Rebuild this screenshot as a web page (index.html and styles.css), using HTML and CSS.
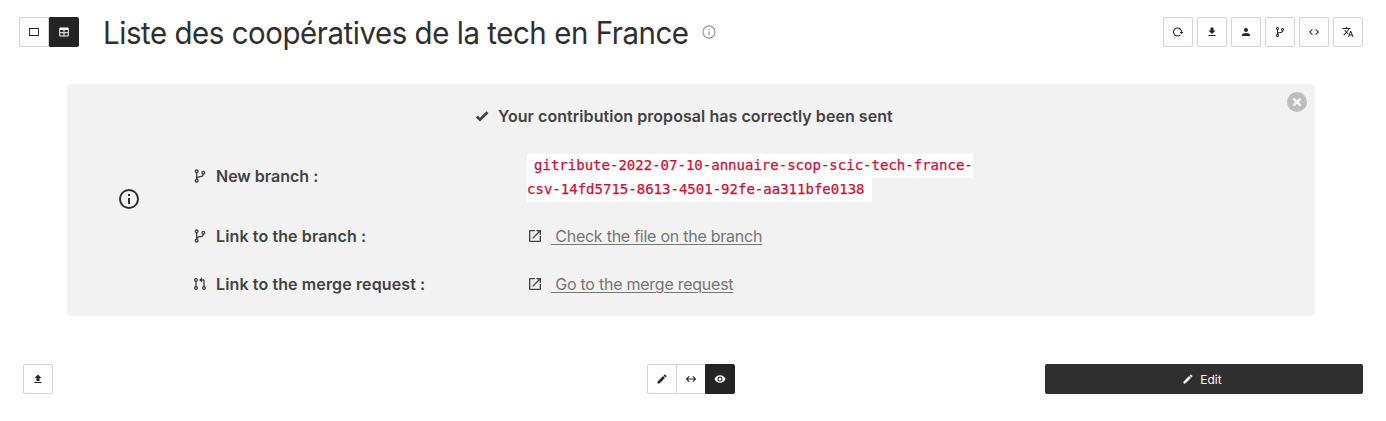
FILE: index.html
```html
<!DOCTYPE html>
<html lang="fr">
<head>
<meta charset="utf-8">
<title>Liste des coopératives de la tech en France</title>
<link rel="stylesheet" href="styles.css">
</head>
<body>
<svg class="sprite" aria-hidden="true">
<symbol id="card" viewBox="0 0 24 24"><path d="M2 4V20H22V4H2M20.2 18.2H3.8V5.8H20.2V18.2Z"/></symbol>
<symbol id="table" viewBox="0 0 24 24"><path d="M4.5 3H19.5A2 2 0 0 1 21.5 5V19A2 2 0 0 1 19.5 21H4.5A2 2 0 0 1 2.5 19V5A2 2 0 0 1 4.5 3M4.5 8V12.5H11V8H4.5M13 8V12.5H19.5V8H13M4.5 14.5V19H11V14.5H4.5M13 14.5V19H19.5V14.5H13Z"/></symbol>
<symbol id="info" viewBox="0 0 24 24"><path d="M11 9H13V7H11M12 20C7.59 20 4 16.41 4 12C4 7.59 7.59 4 12 4C16.41 4 20 7.59 20 12C20 16.41 16.41 20 12 20M12 2A10 10 0 1 0 12 22A10 10 0 1 0 12 2M11 17H13V11H11V17Z"/></symbol>
<symbol id="reload" viewBox="0 0 24 24"><path d="M2 12C2 16.97 6.03 21 11 21C13.39 21 15.68 20.06 17.4 18.4L15.9 16.9C14.63 18.25 12.86 19 11 19C4.76 19 1.64 11.46 6.05 7.05C10.46 2.64 18 5.77 18 12H15L19 16H19.1L23 12H20C20 7.03 15.97 3 11 3C6.03 3 2 7.03 2 12Z"/></symbol>
<symbol id="download" viewBox="0 0 24 24"><path d="M5 20H19V18H5M19 9H15V3H9V9H5L12 16L19 9Z"/></symbol>
<symbol id="upload" viewBox="0 0 24 24"><path d="M9 16V10H5L12 3L19 10H15V16H9M5 20V18H19V20H5Z"/></symbol>
<symbol id="account" viewBox="0 0 24 24"><path d="M12 4A4 4 0 0 1 16 8A4 4 0 0 1 12 12A4 4 0 0 1 8 8A4 4 0 0 1 12 4M12 14C16.42 14 20 15.79 20 18V20H4V18C4 15.79 7.58 14 12 14Z"/></symbol>
<symbol id="branch" viewBox="0 0 24 24"><path d="M13,14C9.64,14 8.54,15.35 8.18,16.24C9.25,16.7 10,17.76 10,19A3,3 0 0,1 7,22A3,3 0 0,1 4,19C4,17.69 4.83,16.58 6,16.17V7.83C4.83,7.42 4,6.31 4,5A3,3 0 0,1 7,2A3,3 0 0,1 10,5C10,6.31 9.17,7.42 8,7.83V13.12C8.88,12.47 10.16,12 12,12C14.67,12 15.56,10.66 15.85,9.77C14.77,9.32 14,8.25 14,7A3,3 0 0,1 17,4A3,3 0 0,1 20,7C20,8.34 19.12,9.5 17.91,9.86C17.65,11.29 16.68,14 13,14M7,18A1,1 0 0,0 6,19A1,1 0 0,0 7,20A1,1 0 0,0 8,19A1,1 0 0,0 7,18M7,4A1,1 0 0,0 6,5A1,1 0 0,0 7,6A1,1 0 0,0 8,5A1,1 0 0,0 7,4M17,6A1,1 0 0,0 16,7A1,1 0 0,0 17,8A1,1 0 0,0 18,7A1,1 0 0,0 17,6Z"/></symbol>
<symbol id="pull" viewBox="0 0 24 24"><path d="M6,3A3,3 0 0,1 9,6C9,7.31 8.17,8.42 7,8.83V15.17C8.17,15.58 9,16.69 9,18A3,3 0 0,1 6,21A3,3 0 0,1 3,18C3,16.69 3.83,15.58 5,15.17V8.83C3.83,8.42 3,7.31 3,6A3,3 0 0,1 6,3M6,5A1,1 0 0,0 5,6A1,1 0 0,0 6,7A1,1 0 0,0 7,6A1,1 0 0,0 6,5M6,17A1,1 0 0,0 5,18A1,1 0 0,0 6,19A1,1 0 0,0 7,18A1,1 0 0,0 6,17M21,18A3,3 0 0,1 18,21A3,3 0 0,1 15,18C15,16.69 15.83,15.58 17,15.17V7H15V10.25L10.75,6L15,1.75V5H17A2,2 0 0,1 19,7V15.17C20.17,15.58 21,16.69 21,18M18,17A1,1 0 0,0 17,18A1,1 0 0,0 18,19A1,1 0 0,0 19,18A1,1 0 0,0 18,17Z"/></symbol>
<symbol id="code" viewBox="0 0 24 24"><path d="M14.6 16.6L19.2 12L14.6 7.4L16 6L22 12L16 18L14.6 16.6M9.4 16.6L4.8 12L9.4 7.4L8 6L2 12L8 18L9.4 16.6Z"/></symbol>
<symbol id="translate" viewBox="0 0 24 24"><path d="M12.87,15.07L10.33,12.56L10.36,12.53C12.1,10.59 13.34,8.36 14.07,6H17V4H10V2H8V4H1V6H12.17C11.5,7.92 10.44,9.75 9,11.35C8.07,10.32 7.3,9.19 6.69,8H4.69C5.42,9.63 6.42,11.17 7.67,12.56L2.58,17.58L4,19L9,14L12.11,17.11L12.87,15.07M18.5,10H16.5L12,22H14L15.12,19H19.87L21,22H23L18.5,10M15.88,17L17.5,12.67L19.12,17H15.88Z"/></symbol>
<symbol id="check" viewBox="0 0 24 24"><path d="M9 20.42L2.79 14.21L5.62 11.38L9 14.77L18.88 4.88L21.71 7.71L9 20.42Z"/></symbol>
<symbol id="open" viewBox="0 0 24 24"><path d="M14,3V5H17.59L7.76,14.83L9.17,16.24L19,6.41V10H21V3M19,19H5V5H12V3H5C3.89,3 3,3.9 3,5V19A2,2 0 0,0 5,21H19A2,2 0 0,0 21,19V12H19V19Z"/></symbol>
<symbol id="pencil" viewBox="0 0 24 24"><path d="M20.71,7.04C21.1,6.65 21.1,6 20.71,5.63L18.37,3.29C18,2.9 17.35,2.9 16.96,3.29L15.12,5.12L18.87,8.87M3,17.25V21H6.75L17.81,9.93L14.06,6.18L3,17.25Z"/></symbol>
<symbol id="horizontal" viewBox="0 0 24 24"><path d="M7.5 6L9 7.5L5.5 11H18.5L15 7.5L16.5 6L22.5 12L16.5 18L15 16.5L18.5 13H5.5L9 16.5L7.5 18L1.5 12Z"/></symbol>
<symbol id="eye" viewBox="0 0 24 24"><path d="M12,9A3,3 0 0,0 9,12A3,3 0 0,0 12,15A3,3 0 0,0 15,12A3,3 0 0,0 12,9M12,17A5,5 0 0,1 7,12A5,5 0 0,1 12,7A5,5 0 0,1 17,12A5,5 0 0,1 12,17M12,4.5C7,4.5 2.73,7.61 1,12C2.73,16.39 7,19.5 12,19.5C17,19.5 21.27,16.39 23,12C21.27,7.61 17,4.5 12,4.5Z"/></symbol>
<symbol id="close" viewBox="0 0 20 20"><path d="M6.5 6.5L13.5 13.5M13.5 6.5L6.5 13.5" fill="none" stroke="currentColor" stroke-width="2.4"/></symbol>
</svg>
<header class="header">
  <div class="group">
    <button class="btn"><svg class="icon"><use href="#card"/></svg></button>
    <button class="btn dark"><svg class="icon"><use href="#table"/></svg></button>
  </div>
  <h1 class="title">Liste des coopératives de la tech en France</h1>
  <svg class="title-info"><use href="#info"/></svg>
  <nav class="tools">
    <button class="btn"><svg class="icon"><use href="#reload"/></svg></button>
    <button class="btn"><svg class="icon"><use href="#download"/></svg></button>
    <button class="btn"><svg class="icon"><use href="#account"/></svg></button>
    <button class="btn"><svg class="icon"><use href="#branch"/></svg></button>
    <button class="btn"><svg class="icon"><use href="#code"/></svg></button>
    <button class="btn"><svg class="icon"><use href="#translate"/></svg></button>
  </nav>
</header>
<section class="notice">
  <button class="close"><svg><use href="#close"/></svg></button>
  <svg class="notice-info"><use href="#info"/></svg>
  <div class="notice-body">
    <p class="sent"><svg class="icon16"><use href="#check"/></svg><span class="sent-text">Your contribution proposal has correctly been sent</span></p>
    <div class="row tall">
      <div class="label"><svg class="icon16"><use href="#branch"/></svg><span>New branch :</span></div>
      <div class="branch-name"><code class="code">gitribute-2022-07-10-annuaire-scop-scic-tech-france-<br>csv-14fd5715-8613-4501-92fe-aa311bfe0138</code></div>
    </div>
    <div class="row">
      <div class="label"><svg class="icon16"><use href="#branch"/></svg><span>Link to the branch :</span></div>
      <div class="target"><svg class="icon16"><use href="#open"/></svg><a class="link">&nbsp;Check the file on the branch</a></div>
    </div>
    <div class="row">
      <div class="label"><svg class="icon16"><use href="#pull"/></svg><span>Link to the merge request :</span></div>
      <div class="target"><svg class="icon16"><use href="#open"/></svg><a class="link">&nbsp;Go to the merge request</a></div>
    </div>
  </div>
</section>
<footer class="footer">
  <button class="btn"><svg class="icon"><use href="#upload"/></svg></button>
  <div class="group modes">
    <button class="btn"><svg class="icon"><use href="#pencil"/></svg></button>
    <button class="btn"><svg class="icon"><use href="#horizontal"/></svg></button>
    <button class="btn dark"><svg class="icon"><use href="#eye"/></svg></button>
  </div>
  <button class="edit"><svg class="icon"><use href="#pencil"/></svg>Edit</button>
</footer>
</body>
</html>
```
FILE: styles.css
```css
* { box-sizing: border-box; }
body { margin: 0; background: #fff; color: #2f2f2f; font-family: Inter, "Liberation Sans", sans-serif; font-size: 16px; line-height: 24px; }
svg { display: block; flex: none; fill: currentColor; }
button { font-family: inherit; }
.sprite { position: absolute; width: 0; height: 0; }
.header { display: flex; align-items: center; height: 64px; padding: 0 23px 0 19px; }
.group { display: flex; }
.btn { display: flex; align-items: center; justify-content: center; width: 30px; height: 30px; padding: 0; border: 1px solid #d3d3d3; border-radius: 2px; background: #fff; color: #242424; }
.btn.dark { background: #242424; border-color: #242424; color: #fff; }
.group .btn:not(:first-child) { border-top-left-radius: 0; border-bottom-left-radius: 0; }
.group .btn:not(:last-child) { border-top-right-radius: 0; border-bottom-right-radius: 0; }
.icon { width: 12px; height: 12px; }
.icon16 { width: 16px; height: 16px; }
.title { margin: 0 0 0 24px; width: 585px; padding-top: 1px; font-size: 31px; font-weight: 400; line-height: 36px; letter-spacing: -0.47px; white-space: nowrap; transform: scaleX(0.95); transform-origin: left; }
.title-info { width: 16px; height: 16px; margin-left: 13px; color: #9e9e9e; }
.tools { display: flex; gap: 4px; margin-left: auto; }
.notice { position: relative; display: flex; align-items: flex-start; width: 1248px; height: 232px; margin: 20px 0 0 67px; padding: 20px 0 0 50px; border-radius: 4px; background: #f2f2f2; color: #424242; }
.notice-info { width: 24px; height: 24px; margin-top: 83px; color: #2f2f2f; }
.notice-body { width: 1000px; margin-left: 51px; }
.close { position: absolute; top: 8px; right: 8px; width: 20px; height: 20px; padding: 0; border: 0; border-radius: 50%; background: #bdbdbd; color: #fff; }
.close svg { width: 20px; height: 20px; }
.sent { display: flex; align-items: center; gap: 8px; margin: 0 0 26px 282px; font-weight: 600; letter-spacing: 0.06px; white-space: nowrap; }
.row { display: grid; grid-template-columns: 335px 1fr; align-items: center; height: 24px; margin-top: 24px; white-space: nowrap; }
.row.tall { height: 48px; margin-bottom: 24px; }
.sent + .row { margin-top: -2px; }
.label { display: flex; align-items: center; gap: 8px; font-weight: 600; letter-spacing: 0.12px; }
.row.tall .label { letter-spacing: 0; }
.branch-name { height: 48px; padding-top: 1px; font: 14px/24px "DejaVu Sans Mono", monospace; }
.code { padding: 3px 7px 5px; background: #fff; color: #cc0f35; font: inherit; letter-spacing: 0.01px; -webkit-text-stroke: 0.25px #cc0f35; }
.target { display: flex; align-items: center; gap: 8px; }
.link { color: #757575; letter-spacing: -0.25px; text-decoration: underline; text-decoration-thickness: 1px; text-underline-offset: 2px; }
.footer { display: flex; align-items: center; margin: 48px 23px 0; }
.modes { margin-left: 594px; }
.modes .btn + .btn { margin-left: -1px; }
.edit { display: flex; align-items: center; justify-content: center; gap: 6px; width: 318px; height: 30px; margin-left: auto; padding: 0 4px 0 0; border: 0; border-radius: 2px; background: #2f2f2f; color: #fff; font-size: 12px; }
```
